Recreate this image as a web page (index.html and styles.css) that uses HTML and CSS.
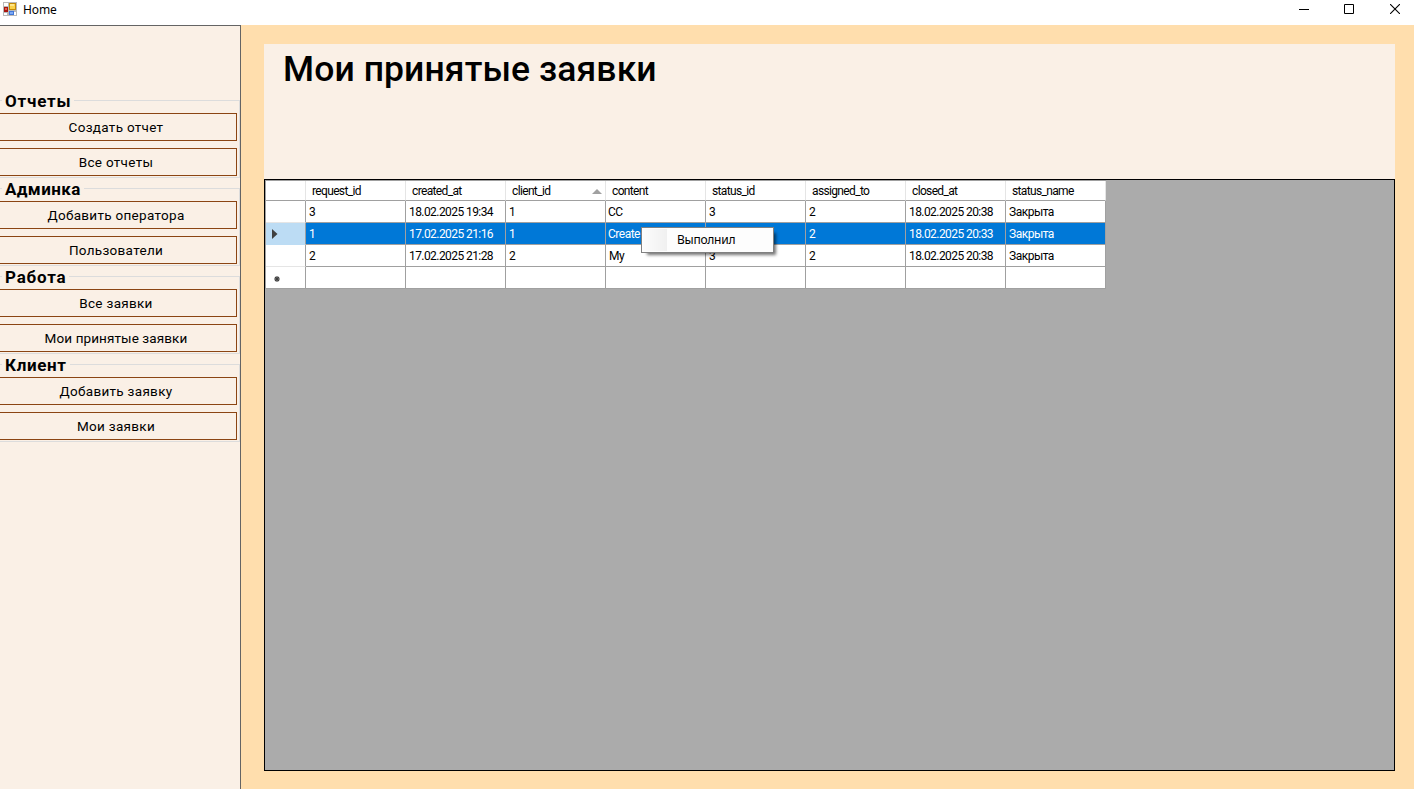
FILE: index.html
```html
<!DOCTYPE html>
<html lang="ru">
<head>
<meta charset="utf-8">
<title>Home</title>
<link rel="stylesheet" href="styles.css">
</head>
<body>
<header class="titlebar">
  <svg class="app-icon" width="14" height="14" viewBox="0 0 14 14" shape-rendering="crispEdges">
    <path d="M0 0h14v14H0z" fill="#b9b9b9"/><path d="M1 1h4v3H1zM1 11h3v2H1zM11 10h2v3h-2z" fill="#fff"/>
    <path d="M6 1h7v7H6z" fill="#c48a08"/><path d="M7 2h5v5H7z" fill="#fbd249"/><path d="M7 2h4v2H7z" fill="#ffe68a"/>
    <path d="M1 5h4v5H1z" fill="#a9150f"/><path d="M2 6h2v2H2z" fill="#e0604c"/>
    <path d="M6 9h5v4H6z" fill="#3f76d8"/><path d="M7 10h3v2H7z" fill="#7eaaf4"/>
  </svg>
  <span class="window-title">Home</span>
  <div class="window-controls">
    <svg width="10" height="10" viewBox="0 0 10 10"><path d="M0 5.5h10" stroke="#000"/></svg>
    <svg width="10" height="10" viewBox="0 0 10 10"><path d="M.5.5h9v9h-9z" fill="none" stroke="#000"/></svg>
    <svg class="close" width="10" height="10" viewBox="0 0 10 10"><path d="M0 0l10 10M10 0L0 10" stroke="#000" stroke-width="1.1"/></svg>
  </div>
</header>
<div class="window-body">
  <nav class="sidebar">
    <section class="group"><h2 class="group-title"><span class="wide">Отчеты</span></h2><button class="nav-button">Создать отчет</button><button class="nav-button">Все отчеты</button></section>
    <section class="group"><h2 class="group-title"><span>Админка</span></h2><button class="nav-button">Добавить оператора</button><button class="nav-button">Пользователи</button></section>
    <section class="group"><h2 class="group-title"><span class="wide">Работа</span></h2><button class="nav-button">Все заявки</button><button class="nav-button tight">Мои принятые заявки</button></section>
    <section class="group"><h2 class="group-title"><span class="medium">Клиент</span></h2><button class="nav-button">Добавить заявку</button><button class="nav-button">Мои заявки</button></section>
  </nav>
  <main class="content">
    <div class="heading-panel"><h1 class="heading">Мои принятые заявки</h1></div>
    <div class="grid-view">
      <div class="grid">
        <div class="row head"><div class="cell rowhead"></div><div class="cell">request_id</div><div class="cell">created_at</div><div class="cell sorted">client_id<svg width="10" height="5" viewBox="0 0 10 5"><path d="M0 5L5 0l5 5z" fill="#a0a0a0"/></svg></div><div class="cell">content</div><div class="cell">status_id</div><div class="cell">assigned_to</div><div class="cell">closed_at</div><div class="cell">status_name</div></div>
        <div class="row"><div class="cell rowhead"></div><div class="cell">3</div><div class="cell date">18.02.2025 19:34</div><div class="cell">1</div><div class="cell text">CC</div><div class="cell">3</div><div class="cell">2</div><div class="cell date">18.02.2025 20:38</div><div class="cell">Закрыта</div></div>
        <div class="row selected"><div class="cell rowhead"><svg width="6" height="10" viewBox="0 0 6 10"><path d="M0 0l5.5 5L0 10z" fill="#404040"/></svg></div><div class="cell">1</div><div class="cell date">17.02.2025 21:16</div><div class="cell">1</div><div class="cell text">Create</div><div class="cell"></div><div class="cell">2</div><div class="cell date">18.02.2025 20:33</div><div class="cell">Закрыта</div></div>
        <div class="row"><div class="cell rowhead"></div><div class="cell">2</div><div class="cell date">17.02.2025 21:28</div><div class="cell">2</div><div class="cell">My</div><div class="cell">3</div><div class="cell">2</div><div class="cell date">18.02.2025 20:38</div><div class="cell">Закрыта</div></div>
        <div class="row"><div class="cell rowhead new"><svg width="6" height="6" viewBox="0 0 6 6"><path d="M3 0v6M0 3h6M1 1l4 4M5 1L1 5" stroke="#404040" stroke-width="1.1"/></svg></div><div class="cell"></div><div class="cell"></div><div class="cell"></div><div class="cell"></div><div class="cell"></div><div class="cell"></div><div class="cell"></div><div class="cell"></div></div>
      </div>
      <div class="menu"><div class="menu-item">Выполнил</div></div>
    </div>
  </main>
</div>
</body>
</html>
```
FILE: styles.css
```css
* { box-sizing: border-box; }
body {
  margin: 0;
  height: 789px;
  display: flex;
  flex-direction: column;
  overflow: hidden;
  background: #fff;
  color: #000;
  font-family: Roboto, "Liberation Sans", sans-serif;
}
.titlebar {
  height: 25px;
  flex: none;
  display: flex;
  align-items: flex-start;
  padding: 2px 14px 0 3px;
}
.window-title {
  margin-left: 6px;
  font: 12px/16px "Noto Sans", sans-serif;
  letter-spacing: -.1px;
}
.window-controls {
  margin-left: auto;
  padding-top: 2px;
  display: flex;
  gap: 35px;
}
.close { margin-left: 1px; }
.window-body { flex: 1; display: flex; min-height: 0; }
.sidebar {
  width: 241px;
  flex: none;
  background: #faf0e6;
  border: solid #646464;
  border-width: 1px 1px 0 0;
  padding-top: 74px;
}
.group {
  height: 78px;
  margin-bottom: 10px;
  border: 1px solid #dcdcdc;
  border-left: 0;
  display: flex;
  flex-direction: column;
  gap: 7px;
}
.group-title {
  margin: -10px 0 -5px 2px;
  height: 20px;
  font: 700 17px/20px Roboto, sans-serif;
  letter-spacing: .4px;
  display: flex;
}
.group-title span { background: #faf0e6; padding: 0 3px; }
.group-title .wide { letter-spacing: .8px; }
.group-title .medium { letter-spacing: .65px; }
.nav-button {
  display: block;
  width: 237px;
  height: 28px;
  flex: none;
  padding: 0 4px 0 0;
  border: 1px solid #8b4513;
  border-left: 0;
  background: none;
  color: #000;
  font: 13.5px/26px Roboto, sans-serif;
  letter-spacing: .3px;
  text-align: center;
}
.nav-button.tight { letter-spacing: .1px; }
.content {
  flex: 1;
  display: flex;
  flex-direction: column;
  background: #ffdead;
  padding: 19px 19px 18px 23px;
}
.heading-panel {
  height: 135px;
  flex: none;
  background: #faf0e6;
  padding: 3px 0 0 19px;
}
.heading {
  margin: 0;
  font: 500 35.5px/44px Roboto, sans-serif;
  letter-spacing: .1px;
  white-space: nowrap;
}
.grid-view {
  flex: 1;
  position: relative;
  background: #ababab;
  border: 1px solid #000;
}
.grid {
  width: 841px;
  border: solid #a0a0a0;
  border-width: 1px 0 0 1px;
}
.row {
  display: grid;
  grid-template-columns: 40px repeat(8, 100px);
  grid-template-rows: 22px;
  height: 22px;
  background: #fff;
}
.cell {
  border: solid #a0a0a0;
  border-width: 0 1px 1px 0;
  padding-left: 3px;
  font-size: 12px;
  line-height: 22px;
  letter-spacing: -.5px;
  white-space: nowrap;
}
.text { padding-left: 2px; }
.date { letter-spacing: -.57px; }
.rowhead {
  display: flex;
  align-items: center;
  padding-left: 6px;
  border-bottom-color: #e5e5e5;
}
.rowhead.new { padding: 3px 0 0 8px; border-bottom-color: #a0a0a0; }
.head { height: 20px; grid-template-rows: 20px; }
.head .cell {
  padding-left: 6px;
  line-height: 21px;
  letter-spacing: -.65px;
  border-right-color: #e5e5e5;
  border-bottom-color: #a0a0a0;
}
.head .sorted {
  display: flex;
  justify-content: space-between;
  align-items: flex-start;
  padding-right: 3px;
}
.head .sorted svg { margin-top: 8px; }
.selected { background: #0078d7; }
.selected .cell { color: #fff; }
.selected .rowhead { background: #bcdcf4; border-bottom-color: #bcdcf4; }
.menu {
  position: absolute;
  left: 376px;
  top: 47px;
  width: 133px;
  height: 26px;
  padding: 1px;
  border: 1px solid #808080;
  background: #fdfdfd;
  box-shadow: 4px 4px 3px -2px rgba(0, 0, 0, .55);
}
.menu-item {
  height: 22px;
  padding-left: 34px;
  background: linear-gradient(90deg, #fcfcfc, #f0f0f0 24px, #fdfdfd 24px);
  font: 12px/22px "Noto Sans", sans-serif;
  letter-spacing: -.25px;
}
```
